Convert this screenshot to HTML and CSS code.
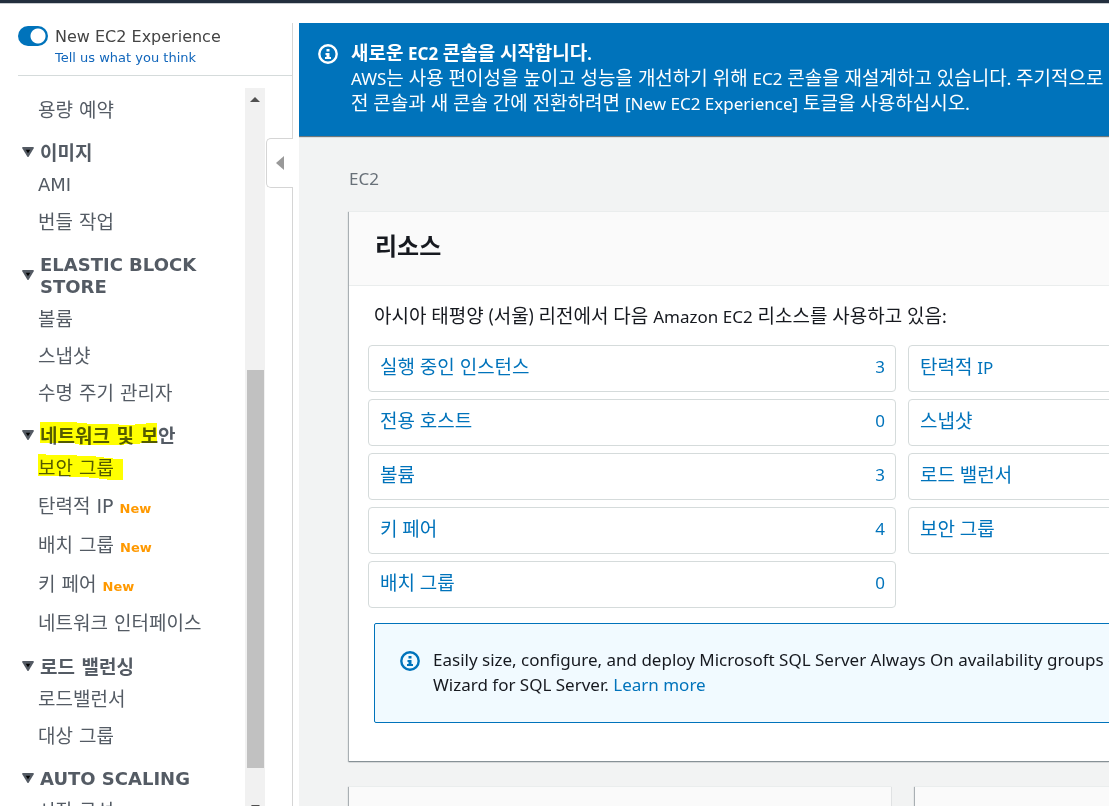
FILE: index.html
```html
<!DOCTYPE html>
<html lang="ko">
<head>
<meta charset="utf-8">
<meta name="viewport" content="width=device-width, initial-scale=1">
<title>EC2</title>
<link rel="stylesheet" href="styles.css">
</head>
<body>
<header class="topbar"></header>
<div class="shell">
  <aside class="sidebar">
    <div class="experience">
      <input class="toggle" type="checkbox" id="experience" checked>
      <div class="experience-text">
        <label for="experience">New EC2 Experience</label>
        <a class="feedback" href="#">Tell us what you think</a>
      </div>
    </div>
    <div class="nav-area">
      <nav class="nav">
        <ul class="nav-list">
          <li><a href="#">용량 예약</a></li>
        </ul>
        <section class="group">
          <h2><svg class="caret" viewBox="0 0 13 11"><path d="M0 1Q0 0 1 0H12Q13 0 13 1L7 11H6Z" fill="#545b64"/><path d="M4 3H9L6.500 7Z" fill="#000"/></svg><span>이미지</span></h2>
          <ul class="nav-list">
            <li class="latin"><a href="#">AMI</a></li>
            <li><a href="#">번들 작업</a></li>
          </ul>
        </section>
        <section class="group">
          <h2 class="latin"><svg class="caret" viewBox="0 0 13 11"><path d="M0 1Q0 0 1 0H12Q13 0 13 1L7 11H6Z" fill="#545b64"/><path d="M4 3H9L6.500 7Z" fill="#000"/></svg><span>ELASTIC BLOCK STORE</span></h2>
          <ul class="nav-list">
            <li><a href="#">볼륨</a></li>
            <li><a href="#">스냅샷</a></li>
            <li><a href="#">수명 주기 관리자</a></li>
          </ul>
        </section>
        <section class="group">
          <h2><svg class="caret" viewBox="0 0 13 11"><path d="M0 1Q0 0 1 0H12Q13 0 13 1L7 11H6Z" fill="#545b64"/><path d="M4 3H9L6.500 7Z" fill="#000"/></svg><span class="marked">네트워크 및 보안<svg class="marker" width="117" height="24" viewBox="0 0 117 24"><path d="M0 0H37V1H47V2H79V3H95V2H106V1H117V21H100V22H84V23H39V22H35V21H0Z" fill="#ff0"/></svg></span></h2>
          <ul class="nav-list">
            <li><a class="marked" href="#">보안 그룹<svg class="marker" width="85" height="26" viewBox="0 0 85 26"><path d="M0 0H8V1H39V2H58V3H66V4H75V5H85V26H69V25H61V24H51V23H31V22H0Z" fill="#ff0"/></svg></a></li>
            <li class="tall"><a href="#">탄력적 IP</a> <span class="new">New</span></li>
            <li class="tall"><a href="#">배치 그룹</a> <span class="new">New</span></li>
            <li class="tall"><a href="#">키 페어</a> <span class="new">New</span></li>
            <li class="tall"><a href="#">네트워크 인터페이스</a></li>
          </ul>
        </section>
        <section class="group">
          <h2><svg class="caret" viewBox="0 0 13 11"><path d="M0 1Q0 0 1 0H12Q13 0 13 1L7 11H6Z" fill="#545b64"/><path d="M4 3H9L6.500 7Z" fill="#000"/></svg><span>로드 밸런싱</span></h2>
          <ul class="nav-list">
            <li><a href="#">로드밸런서</a></li>
            <li><a href="#">대상 그룹</a></li>
          </ul>
        </section>
        <section class="group">
          <h2 class="latin"><svg class="caret" viewBox="0 0 13 11"><path d="M0 1Q0 0 1 0H12Q13 0 13 1L7 11H6Z" fill="#545b64"/><path d="M4 3H9L6.500 7Z" fill="#000"/></svg><span>AUTO SCALING</span></h2>
          <ul class="nav-list">
            <li><a href="#">시작 구성</a></li>
          </ul>
        </section>
      </nav>
      <div class="scrollbar" aria-hidden="true">
        <svg class="scroll-arrow" viewBox="0 0 20 20"><path d="M10 9L15 14H5Z" fill="#505050"/></svg>
        <div class="scroll-before"></div>
        <div class="scroll-thumb"></div>
        <div class="scroll-after"></div>
        <svg class="scroll-arrow" viewBox="0 0 20 20"><path d="M6 9H15L10 14Z" fill="#505050"/></svg>
      </div>
    </div>
    <button class="collapse" type="button" aria-label="메뉴 접기"><svg width="8" height="14" viewBox="0 0 8 14"><path d="M0 7L8 0V14Z" fill="#999"/></svg></button>
  </aside>
  <main class="main">
    <div class="banner">
      <svg class="info" viewBox="0 0 20 20"><circle cx="10" cy="10" r="8.700" fill="none" stroke="currentColor" stroke-width="2.400"/><path d="M8.500 5H11.500V7.500H8.500ZM7.500 9H11.500V13H13V15H7V13H8.500V11H7.500Z" fill="currentColor"/></svg>
      <div class="message">
        <strong>새로운 <span lang="en">EC2</span> 콘솔을 시작합니다.</strong>
        <p><span lang="en">AWS</span>는 사용 편이성을 높이고 성능을 개선하기 위해 <span lang="en">EC2</span> 콘솔을 재설계하고 있습니다. 주기적으로 새</p>
        <p>전 콘솔과 새 콘솔 간에 전환하려면 <span lang="en">[New EC2 Experience]</span> 토글을 사용하십시오.</p>
      </div>
    </div>
    <div class="content">
      <p class="crumb">EC2</p>
      <section class="panel">
        <h1 class="panel-head">리소스</h1>
        <div class="panel-body">
          <p class="intro">아시아 태평양 (서울) 리전에서 다음 <span lang="en">Amazon EC2</span> 리소스를 사용하고 있음:</p>
          <div class="resources">
            <a class="tile" href="#"><span>실행 중인 인스턴스</span><span class="count">3</span></a>
            <a class="tile" href="#"><span>탄력적 <span lang="en">IP</span></span></a>
            <a class="tile" href="#"><span>전용 호스트</span><span class="count">0</span></a>
            <a class="tile" href="#"><span>스냅샷</span></a>
            <a class="tile" href="#"><span>볼륨</span><span class="count">3</span></a>
            <a class="tile" href="#"><span>로드 밸런서</span></a>
            <a class="tile" href="#"><span>키 페어</span><span class="count">4</span></a>
            <a class="tile" href="#"><span>보안 그룹</span></a>
            <a class="tile" href="#"><span>배치 그룹</span><span class="count">0</span></a>
          </div>
          <div class="notice">
            <svg class="info" viewBox="0 0 20 20"><circle cx="10" cy="10" r="8.700" fill="none" stroke="currentColor" stroke-width="2.400"/><path d="M8.500 5H11.500V7.500H8.500ZM7.500 9H11.500V13H13V15H7V13H8.500V11H7.500Z" fill="currentColor"/></svg>
            <div class="message">
              <p>Easily size, configure, and deploy Microsoft SQL Server Always On availability groups on</p>
              <p>Wizard for SQL Server. <a href="#">Learn more</a></p>
            </div>
          </div>
        </div>
      </section>
      <div class="cards">
        <section class="panel card"></section>
        <section class="panel card"></section>
      </div>
    </div>
  </main>
</div>
</body>
</html>
```
FILE: styles.css
```css
* { box-sizing: border-box; }
body {
  margin: 0;
  height: 100vh;
  overflow: hidden;
  display: flex;
  flex-direction: column;
  gap: 19px;
  background: #fff;
  color: #16191f;
  font: 19px/25px Lato, "Noto Sans CJK KR", sans-serif;
}
h1, h2, p, ul { margin: 0; padding: 0; }
ul { list-style: none; }
a { text-decoration: none; color: #0073bb; }
[lang="en"], .count, .crumb, .notice { font-family: "Noto Sans", sans-serif; font-size: 17px; }
[lang="en"] { line-height: 1; }

.topbar { flex: none; height: 4px; background: #232f3e; border-bottom: 1px solid #c8ccd0; }
.shell { flex: 1; min-height: 0; display: flex; gap: 6px; }

.sidebar {
  position: relative;
  flex: none;
  width: 293px;
  padding-left: 18px;
  display: flex;
  flex-direction: column;
  border-right: 1px solid #d5d5d5;
  font: 19px/22px "DejaVu Sans", "Noto Sans CJK KR", sans-serif;
  color: #545b64;
}
.experience {
  display: flex;
  gap: 7px;
  height: 53px;
  padding-top: 3px;
  border-bottom: 1px solid #d5dbdb;
}
.toggle {
  appearance: none;
  flex: none;
  width: 30px;
  height: 20px;
  margin: 0;
  border-radius: 10px;
  background: radial-gradient(circle at 20px 10px, #fff 7px, #0073bb 8px);
}
.experience-text { display: flex; flex-direction: column; line-height: 21px; font-size: 16px; color: #444; }
.feedback { font-size: 13px; line-height: 22px; color: #1166bb; }

.nav-area { flex: 1; min-height: 0; display: flex; padding-top: 12px; }
.nav { flex: 1; min-width: 0; overflow: hidden; padding: 11px 24px 0 4px; }
.nav-list { display: flex; flex-direction: column; gap: 15px; padding-left: 16px; white-space: nowrap; }
.nav-list li { height: 22px; }
.nav-list .tall { height: 24px; line-height: 24px; }
.nav a { color: #545b64; }
.group { margin-top: 21px; }
.group h2 { display: flex; align-items: center; gap: 6px; margin-bottom: 10px; font-size: 19px; line-height: 22px; }
.group .latin { font-size: 18px; }
.caret { flex: none; width: 12px; height: 12px; padding-bottom: 2px; }
.new { color: #ff9900; font-size: 13px; font-weight: bold; }
.marked { position: relative; }
.marker { position: absolute; left: 0; top: -3px; mix-blend-mode: multiply; }

.scrollbar { flex: none; width: 20px; margin: 0 27px -10px 0; background: #f1f1f1; display: flex; flex-direction: column; }
.scroll-arrow { flex: none; width: 20px; height: 20px; }
.scroll-before { flex: 262; }
.scroll-thumb { flex: 398; margin: 0 1px 0 2px; background: #c1c1c1; }
.scroll-after { flex: 28; }

.collapse {
  position: absolute;
  right: -1px;
  top: 115px;
  width: 27px;
  height: 50px;
  padding: 0;
  display: grid;
  place-items: center;
  background: #fff;
  border: 1px solid #d5d5d5;
  border-right: 0;
  border-radius: 5px 0 0 5px;
}

.main { flex: 1; min-width: 0; overflow: hidden; background: #f2f3f3; }
.banner {
  display: flex;
  gap: 13px;
  height: 113px;
  padding: 17px 0 0 19px;
  background: #0073bb;
  color: #fff;
  box-shadow: 0 1px 1px #6d777b;
}
.info { flex: none; width: 20px; height: 20px; margin-top: 4px; }
.message { display: flex; flex-direction: column; white-space: nowrap; }
.content { padding: 30px 0 0 50px; }
.crumb { color: #687078; margin-bottom: 20px; }
.panel {
  background: #fff;
  border-top: 1px solid #eaeded;
  box-shadow: 0 1px 1px #879196, -1px 1px 1px #b0b6ba;
}
.panel-head {
  padding: 15px 26px 21px;
  background: #fafafa;
  border-bottom: 1px solid #eaeded;
  font-size: 24px;
  line-height: 37px;
}
.panel-body { padding: 17px 0 38px 19px; }
.intro { padding-left: 6px; margin-bottom: 17px; white-space: nowrap; }
.resources { display: grid; grid-template-columns: repeat(2, minmax(528px, 1fr)); gap: 7px 12px; }
.tile {
  display: flex;
  justify-content: space-between;
  height: 47px;
  padding: 8px 10px 0 11px;
  border: 1px solid #d5dbdb;
  border-radius: 4px;
}
.notice {
  display: flex;
  gap: 13px;
  height: 100px;
  margin: 15px -2px 0 6px;
  padding: 23px 0 0 25px;
  border: 1px solid #0073bb;
  border-radius: 2px;
  background: #f1faff;
}
.notice .info { color: #0073bb; }
.cards { display: grid; grid-template-columns: repeat(2, minmax(542px, 1fr)); gap: 24px; margin-top: 25px; }
.card { height: 100px; background: #fafafa; }
```
